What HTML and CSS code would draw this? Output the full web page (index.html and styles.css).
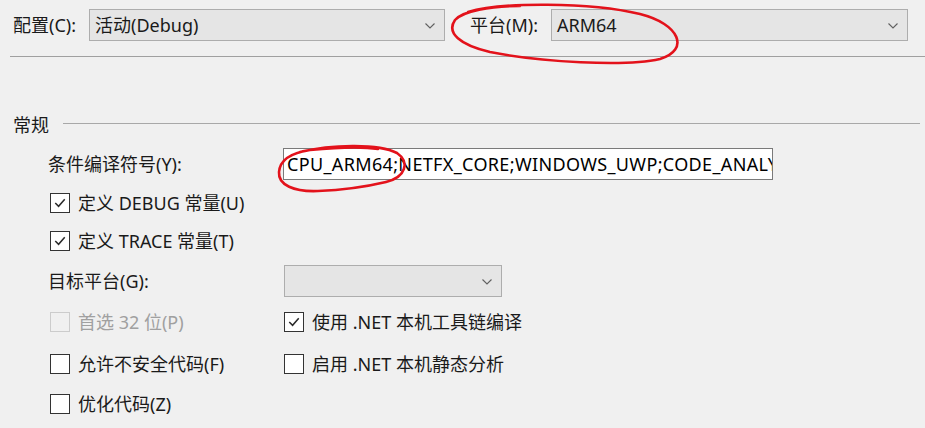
FILE: index.html
```html
<!DOCTYPE html>
<html lang="zh-CN">
<head>
<meta charset="utf-8">
<title>生成</title>
<link rel="stylesheet" href="styles.css">
</head>
<body>
<div class="page">
  <div class="top">
    <span class="top-label cfg-label">配置(C):</span>
    <div class="select cfg-select"><span>活动(Debug)</span><svg class="chev" viewBox="0 0 10 6"><path d="M0.5 0.5 L5 5 L9.5 0.5"/></svg></div>
    <span class="top-label plat-label">平台(M):</span>
    <div class="select plat-select"><span>ARM64</span><svg class="chev" viewBox="0 0 10 6"><path d="M0.5 0.5 L5 5 L9.5 0.5"/></svg></div>
  </div>
  <div class="sep"></div>

  <div class="group-head"><span>常规</span><div class="group-line"></div></div>

  <div class="grid">
    <span class="label">条件编译符号(Y):</span>
    <div class="textbox"><span class="textbox-inner">CPU_ARM64;NETFX_CORE;WINDOWS_UWP;CODE_ANALYSIS</span></div>

    <label class="check span2"><span class="box checked"><svg viewBox="0 0 19 19"><path d="M4.5 9.5 L8 13 L14.5 5.5"/></svg></span>定义 DEBUG 常量(U)</label>

    <label class="check span2"><span class="box checked"><svg viewBox="0 0 19 19"><path d="M4.5 9.5 L8 13 L14.5 5.5"/></svg></span>定义 TRACE 常量(T)</label>

    <span class="label">目标平台(G):</span>
    <div class="select target-select"><span></span><svg class="chev" viewBox="0 0 10 6"><path d="M0.5 0.5 L5 5 L9.5 0.5"/></svg></div>

    <label class="check disabled"><span class="box"></span>首选 32 位(P)</label>
    <label class="check"><span class="box checked"><svg viewBox="0 0 19 19"><path d="M4.5 9.5 L8 13 L14.5 5.5"/></svg></span>使用 .NET 本机工具链编译</label>

    <label class="check"><span class="box"></span>允许不安全代码(F)</label>
    <label class="check"><span class="box"></span>启用 .NET 本机静态分析</label>

    <label class="check"><span class="box"></span>优化代码(Z)</label>
  </div>

  <svg class="marks" viewBox="0 0 925 428">
    <path d="M468 12 C 500 2, 590 2, 640 14 C 680 24, 690 50, 660 59 C 625 67, 540 62, 490 52 C 460 45, 446 33, 455 20 C 463 11, 490 6, 520 6"/>
    <path d="M300 152 C 330 145, 378 143, 397 153 C 410 162, 406 177, 386 182 C 365 187, 345 190, 318 191 C 294 192, 278 185, 279 172 C 280 160, 290 153, 310 150 C 330 148, 360 146, 378 149"/>
  </svg>
</div>
</body>
</html>
```

FILE: styles.css
```css
* { box-sizing: border-box; }
html, body { margin: 0; padding: 0; }
body {
  background: #f0f0f0;
  color: #1a1a1a;
  font-family: "Noto Sans", "Noto Sans CJK SC", sans-serif;
  font-size: 18px;
  line-height: 22px;
  width: 925px;
  height: 428px;
  overflow: hidden;
}
.page { position: relative; width: 925px; height: 428px; }

.top {
  display: flex;
  align-items: center;
  height: 41px;
  padding: 9px 0 0 13px;
}
.cfg-label { width: 76px; }
.plat-label { width: 81px; margin-left: 25px; }
.select {
  position: relative;
  display: flex;
  align-items: center;
  height: 32px;
  padding-left: 5px;
  background: #e5e5e5;
  border: 1px solid #adadad;
}
.cfg-select { width: 356px; }
.plat-select { width: 357px; }
.chev {
  position: absolute;
  right: 9px;
  top: 13px;
  width: 10px;
  height: 6px;
  fill: none;
  stroke: #606060;
  stroke-width: 1.1;
}
.sep {
  height: 1px;
  margin: 15px 0 0 10px;
  background: #a0a0a0;
}

.group-head {
  display: flex;
  align-items: center;
  height: 22px;
  margin: 57px 5px 0 13px;
}
.group-line {
  flex: 1;
  height: 1px;
  margin: -3px 0 0 14px;
  background: #a8a8a8;
}

.grid {
  display: grid;
  grid-template-columns: 234px 1fr;
  grid-template-rows: 39px 39px 38px 42px 40px 44px 36px;
  align-items: center;
  margin-top: 8px;
  padding-left: 50px;
}
.span2 { grid-column: 1 / 3; }
.label { margin-left: -2px; }
.textbox {
  width: 490px;
  height: 32px;
  margin-left: -1px;
  padding: 4px 0 0 3px;
  background: #fff;
  border: 1px solid #7a7a7a;
  color: #000;
  white-space: nowrap;
  overflow: hidden;
}
.textbox-inner { letter-spacing: 0.35px; }
.target-select { width: 218px; }

.check {
  display: flex;
  align-items: center;
  gap: 8px;
}
.box {
  width: 20px;
  height: 20px;
  border: 1px solid #333;
  background: #fff;
  display: inline-flex;
}
.box svg {
  width: 18px;
  height: 18px;
  fill: none;
  stroke: #2a2a2a;
  stroke-width: 1.6;
}
.disabled { color: #a0a0a0; }
.disabled .box { border-color: #cccccc; background: #f0f0f0; }

.marks {
  position: absolute;
  left: 0;
  top: 0;
  width: 925px;
  height: 428px;
  pointer-events: none;
  fill: none;
  stroke: #e3121b;
  stroke-width: 2.6;
  stroke-linecap: round;
}
```
